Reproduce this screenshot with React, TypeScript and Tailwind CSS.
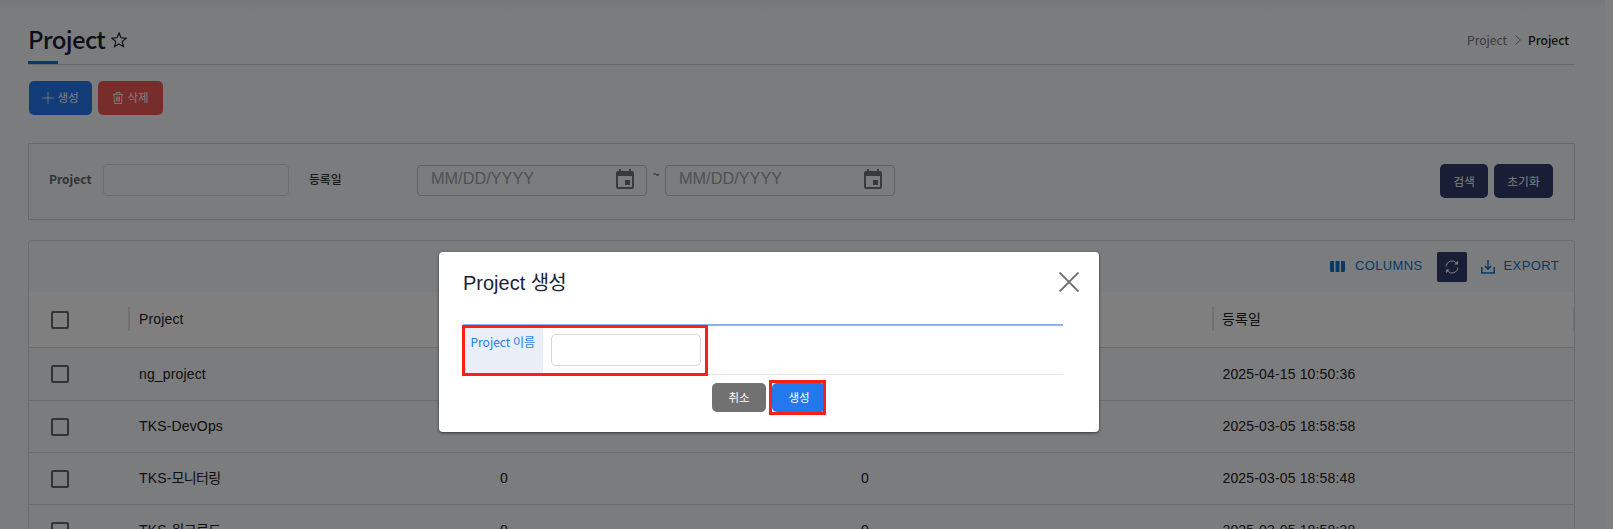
import React from "react";

function Checkbox() {
  return <span className="block size-[18px] rounded-[2px] border-2 border-[#666666]" />;
}

function DateField() {
  return (
    <div className="mt-px flex h-[31px] w-[230px] items-center rounded-[4px] border border-[#c0c1c4] pr-[9px] pl-[13px]">
      <span className="flex-1 -translate-y-[2px] font-['Liberation_Sans',sans-serif] text-[16.3px] leading-none text-[#a3a4a7]">MM/DD/YYYY</span>
      <svg viewBox="0 0 24 24" className="size-6 -translate-y-[1px]" fill="#757575">
        <path d="M17 12h-5v5h5v-5zM16 1v2H8V1H6v2H5c-1.11 0-1.990.9-1.990 2L3 19c0 1.100.890 2 2 2h14c1.100 0 2-.9 2-2V5c0-1.100-.9-2-2-2h-1V1h-2zm3 18H5V8h14v11z" />
      </svg>
    </div>
  );
}

const rows = [
  { prefix: "ng_project", suffix: "", nodes: "0", users: "0", date: "2025-04-15 10:50:36" },
  { prefix: "TKS-DevOps", suffix: "", nodes: "0", users: "0", date: "2025-03-05 18:58:58" },
  { prefix: "TKS-", suffix: "모니터링", nodes: "0", users: "0", date: "2025-03-05 18:58:48" },
  { prefix: "TKS-", suffix: "워크로드", nodes: "0", users: "0", date: "2025-03-05 18:58:38" },
];

function Separator() {
  return <span className="absolute top-[15px] -left-px h-6 w-[2px] bg-[#e0e0e0]" />;
}

function Table() {
  return (
    <section className="mt-5 shrink-0 overflow-hidden rounded-t-[4px] border border-[#d8d9dd] font-['Liberation_Sans','Noto_Sans_CJK_KR',sans-serif] text-[14px] tracking-[0.15px] text-[#212121]">
      <div className="flex h-[51px] items-center justify-end pr-[15px] text-[13px] tracking-[0.37px] text-[#1075cc]">
        <svg viewBox="0 0 15 11" className="mr-[10px] h-[11px] w-[15px]" fill="currentColor">
          <path d="M1 0h3v11H1q-1 0-1-1V1q0-1 1-1zM5.500 0h4v11h-4zM11 0h3q1 0 1 1v9q0 1-1 1h-3z" />
        </svg>
        <span className="-translate-y-px">COLUMNS</span>
        <button className="mr-[14px] ml-[14px] flex size-[30px] items-center justify-center rounded-[2px] bg-[#2e3d6a] text-white">
          <svg viewBox="0 0 14 14" className="size-[14px]" fill="none" stroke="currentColor" strokeWidth="1">
            <path d="M1 6.500A6 6 0 0 1 11.500 3M13 7.500A6 6 0 0 1 2.500 11" />
            <path d="M13 .8v3.700H9.300zM1 13.200V9.500h3.700z" fill="currentColor" stroke="none" />
          </svg>
        </button>
        <svg viewBox="0 0 14 14" className="mr-[9px] size-[14px]" fill="none" stroke="currentColor" strokeWidth="1.500">
          <path d="M.8 7v6h12.400V7M7 0v9M3.800 6L7 9.200 10.200 6" />
        </svg>
        <span className="-translate-y-px">EXPORT</span>
      </div>
      <div className="flex h-14 items-center border-b border-[#d8d9dd] bg-white">
        <div className="w-[100px] pl-[22px]"><Checkbox /></div>
        <div className="relative flex h-full w-[361px] items-center pl-[10px]"><Separator />Project</div>
        <div className="relative h-full w-[361px]"><Separator /></div>
        <div className="relative h-full w-[362px]"><Separator /></div>
        <div className="relative flex h-full flex-1 items-center pl-[9px]">
          <Separator />등록일
          <span className="absolute top-[15px] right-0 h-6 w-px bg-[#e0e0e0]" />
        </div>
      </div>
      {rows.map((row, i) => (
        <div key={row.date} className={i === 0 ? "flex h-[53px] items-center border-b border-[#d8d9dd]" : "flex h-[52px] items-center border-b border-[#d8d9dd]"}>
          <div className="w-[100px] pl-[22px]"><Checkbox /></div>
          <div className="w-[361px] pl-[10px]">{row.prefix}<span className="tracking-[-0.6px]">{row.suffix}</span></div>
          <div className="w-[361px] pl-[10px]">{row.nodes}</div>
          <div className="w-[362px] pl-[10px]">{row.users}</div>
          <div className="pl-[9.500px]">{row.date}</div>
        </div>
      ))}
    </section>
  );
}

function Dialog() {
  return (
    <div className="absolute top-[252px] left-[439px] flex h-[180px] w-[660px] flex-col rounded-[4px] bg-white pr-5 pl-6 font-['Noto_Sans_CJK_KR',sans-serif] shadow-[0_1px_3px_rgba(0,0,0,0.6)]">
      <div className="flex h-[72px] shrink-0 items-start justify-between">
        <h2 className="mt-[16px] font-['Liberation_Sans','Noto_Sans_CJK_KR',sans-serif] text-[20px] leading-[30px] text-[#1b1f38]">Project <span className="tracking-[-1px]">생성</span></h2>
        <svg viewBox="0 0 20 20" className="mt-5 size-5" stroke="#6e6e6e" strokeWidth="1.900"><path d="M.5.500l19 19M19.500.500l-19 19" /></svg>
      </div>
      <div className="relative flex h-[51px] w-[600px] shrink-0 border-t-2 border-b border-t-[#86b4f7] border-b-[#e6e6e6]">
        <div className="w-20 bg-[#e9eef7] pt-[7px] pl-[7.500px] text-[12px] leading-[18px] whitespace-nowrap text-[#2c7bea]">Project 이름</div>
        <div className="mt-2 ml-2 h-8 w-[150px] rounded-[5px] border border-[#d6d6d6]" />
        <span className="absolute -top-px -left-px h-[51px] w-[246px] border-[3px] border-[#fb1f17]" />
      </div>
      <div className="mt-2 flex w-[600px] justify-center gap-[6px] pl-3 text-[11.500px] text-white">
        <button className="h-[29px] w-[54px] rounded-[5px] bg-[#717171]">취소</button>
        <div className="relative">
          <button className="h-[29px] w-[54px] rounded-[5px] bg-[#2478ee]">생성</button>
          <span className="absolute -top-[3px] -left-[3px] h-[35px] w-[57px] border-[3px] border-[#fb1f17]" />
        </div>
      </div>
    </div>
  );
}

export default function App() {
  return (
    <div className="relative flex h-[529px] overflow-hidden font-['Noto_Sans_CJK_KR',sans-serif]">
      <main className="flex min-w-0 flex-1 flex-col bg-[linear-gradient(#eeeff3,#f7f8fc_10px)] pr-[30px] pl-7">
        <header className="relative flex h-[65px] shrink-0 items-center justify-between border-b border-[#d2d3d7] pt-[15px] pr-[6px]">
          <div className="flex items-center">
            <h1 className="-translate-y-[1.500px] text-[24px] leading-none font-medium tracking-[-0.700px] text-[#1b1f38]">Project</h1>
            <svg viewBox="0 0 16 16" className="ml-[6px] size-4" fill="none" stroke="#111" strokeWidth="1.100">
              <path d="M8 1l2 4.800 5.200.4-4 3.400 1.300 5.100L8 12l-4.500 2.700 1.300-5.100-4-3.400L6 5.800z" />
            </svg>
          </div>
          <nav className="flex items-center text-[12px] text-[#777]">
            <span>Project</span>
            <svg viewBox="0 0 6 10" className="mr-[7px] ml-2 h-[10px] w-[6px]" fill="none" stroke="#777"><path d="M.7.500L5.300 5 .7 9.500" /></svg>
            <span className="font-medium text-[#222]">Project</span>
          </nav>
          <span className="absolute bottom-0 left-0 h-[3px] w-[30px] bg-[#1470d8]" />
        </header>
        <div className="mt-4 flex gap-[6px] pl-px text-[11.500px] text-white">
          <button className="flex h-[34px] w-[63px] items-center justify-center gap-[3px] rounded-[5px] bg-[#2478ee]">
            <svg viewBox="0 0 12 12" className="size-3" stroke="currentColor" strokeWidth=".8"><path d="M6 0v12M0 6h12" /></svg>생성
          </button>
          <button className="flex h-[34px] w-[65px] items-center justify-center gap-[3px] rounded-[5px] bg-[#ee5a52]">
            <svg viewBox="0 0 12 12" className="size-3" fill="none" stroke="currentColor" strokeWidth=".9"><path d="M1 2.500h10M4 2.500V.5h4v2M2 2.500l.5 9h7l.5-9M4.500 4.500v5M6 4.500v5M7.500 4.500v5" /></svg>삭제
          </button>
        </div>
        <section className="mt-7 flex h-[77px] shrink-0 items-start border border-[#d2d3d7] pt-5 pr-[21px] pl-5">
          <b className="mt-[6px] w-[54px] text-[12px] leading-[18px] font-bold text-[#666]">Project</b>
          <span className="h-8 w-[186px] rounded-[5px] border border-[#d8d9dd]" />
          <b className="mt-[6px] ml-5 w-[108px] text-[11.800px] leading-[18px] font-medium text-[#333]">등록일</b>
          <DateField />
          <span className="mt-[1px] w-[18px] text-center text-[12px] leading-[18px] text-[#333]">~</span>
          <DateField />
          <div className="ml-auto flex gap-[6px] text-[11.800px] text-white">
            <button className="h-[34px] w-12 rounded-[5px] bg-[#2e3d6a]">검색</button>
            <button className="h-[34px] w-[59px] rounded-[5px] bg-[#2e3d6a]">초기화</button>
          </div>
        </section>
        <Table />
      </main>
      <div className="w-2 bg-[#fcfcfc]" />
      <div className="absolute inset-0 bg-black/50" />
      <Dialog />
    </div>
  );
}
